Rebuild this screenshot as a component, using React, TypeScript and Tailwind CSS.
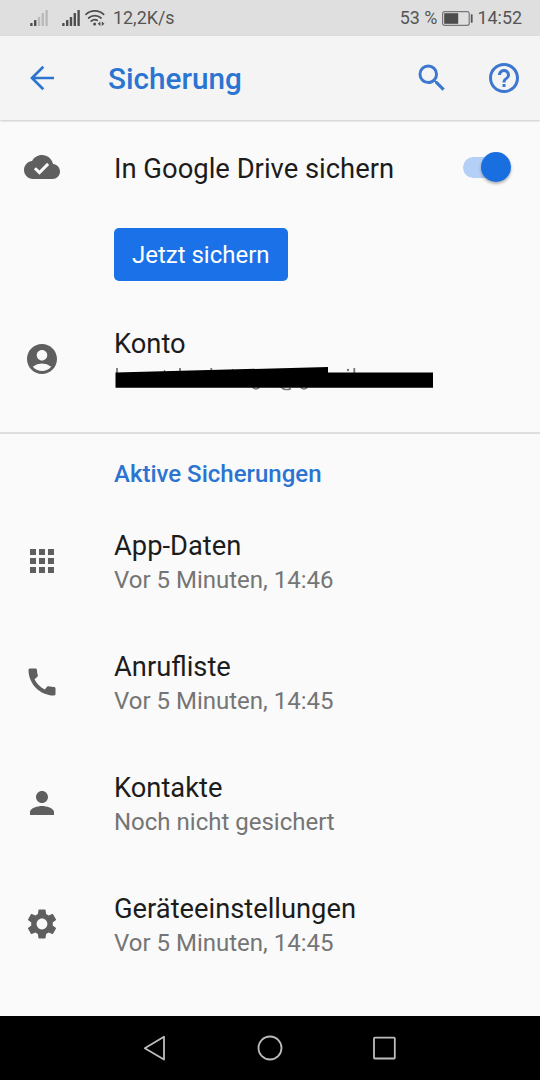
import type { ReactNode } from 'react'
import {
  MdAccountCircle,
  MdApps,
  MdCall,
  MdHelpOutline,
  MdPerson,
  MdSearch,
  MdSettings,
} from 'react-icons/md'

const BACKUPS = [
  { id: 'apps', title: 'App-Daten', status: 'Vor 5 Minuten, 14:46', icon: <MdApps size={36} /> },
  { id: 'calls', title: 'Anrufliste', status: 'Vor 5 Minuten, 14:45', icon: <MdCall size={36} /> },
  { id: 'contacts', title: 'Kontakte', status: 'Noch nicht gesichert', icon: <MdPerson size={36} /> },
  { id: 'settings', title: 'Geräteeinstellungen', status: 'Vor 5 Minuten, 14:45', icon: <MdSettings size={36} /> },
]

function Signal({ strength }: { strength: number }) {
  return (
    <svg width="19" height="18" viewBox="0 0 19 18">
      {[3, 6, 9, 13, 16].map((h, i) => (
        <rect key={h} x={0.2 + i * 3.8} y={17 - h} width="2.4" height={h} rx="0.6" fill={i < strength ? '#4d4d4d' : '#b9b9b9'} />
      ))}
    </svg>
  )
}

function Wifi() {
  return (
    <svg width="20" height="18" viewBox="0 0 20 18" fill="none" stroke="#4d4d4d" strokeWidth="1.7" strokeLinecap="round">
      <path d="M1 5.4a13 13 0 0 1 17.6 0" />
      <path d="M3.6 9a9.2 9.2 0 0 1 12.4 0" />
      <path d="M6.2 12.2a5.4 5.4 0 0 1 6-.9" />
      <circle cx="9.6" cy="15" r="1.5" fill="#4d4d4d" stroke="none" />
      <path d="M15.4 12.6v4.4L12.8 14.8zM16.8 12.6v4.4l2.6-2.2z" fill="#4d4d4d" stroke="none" />
    </svg>
  )
}

function Battery() {
  return (
    <svg width="31" height="15" viewBox="0 0 31 15">
      <rect x="0.6" y="0.7" width="26.6" height="13.6" rx="2" fill="none" stroke="#777" strokeWidth="1.2" />
      <rect x="2.2" y="2.2" width="14" height="10.6" fill="#4d4d4d" />
      <rect x="28.8" y="3.2" width="1.8" height="8.6" rx="0.5" fill="#555" />
    </svg>
  )
}

function StatusBar() {
  return (
    <div className="flex h-9 items-center bg-[#dfdfdf] pl-[30px] pr-[18px] text-[17.9px] text-[#555]">
      <Signal strength={2} />
      <div className="ml-[13px] flex items-center gap-[4px]">
        <Signal strength={5} />
        <Wifi />
      </div>
      <span className="ml-[8px] pt-px">12,2K/s</span>
      <span className="ml-auto pt-px">53 %</span>
      <div className="ml-[5px] mr-[4px]">
        <Battery />
      </div>
      <span className="pt-px">14:52</span>
    </div>
  )
}

function AppBar() {
  return (
    <header className="flex h-[84px] items-center bg-[#f4f4f4] pl-6 pr-[18px] text-[#3c78cf] shadow-[0_1px_2px_rgba(0,0,0,0.2)]">
      <svg width="36" height="36" viewBox="0 0 36 36" fill="none" stroke="#2b74d2" strokeWidth="2.7">
        <path d="M30 18H8M19.3 6.8L8 18l11.3 11.2" />
      </svg>
      <h1 className="ml-12 pt-[2px] text-[29.7px] font-medium leading-9 text-[#2b74d2]">Sicherung</h1>
      <MdSearch size={36} className="ml-auto" />
      <MdHelpOutline size={36} className="ml-9" />
    </header>
  )
}

function CloudDone() {
  return (
    <svg width="36" height="36" viewBox="0 0 24 24" fill="currentColor">
      <path d="M19.35 10.04C18.67 6.59 15.64 4 12 4 9.11 4 6.6 5.64 5.35 8.04 2.34 8.36 0 10.91 0 14c0 3.31 2.69 6 6 6h13c2.76 0 5-2.24 5-5 0-2.64-2.05-4.78-4.65-4.96zM10.3 17.2l-3.7-3.7 1.4-1.4 2.3 2.3 5.1-5.2 1.4 1.4z" />
    </svg>
  )
}

// Account name is blacked out; only the tips of a few letters stay visible.
function HiddenAccount() {
  return (
    <svg className="block" width="320" height="34" viewBox="114 361 320 34">
      <g stroke="#777" strokeWidth="1.8" fill="none">
        <path d="M117 368v7M180 368v6M211.3 368v6M354.3 368v6" />
        <path d="M164.5 370v5M232.5 369v5" strokeWidth="1.3" />
        <path d="M251.5 386q4.5 6 9 0M280 386.5q5 5 11 2M299.5 386q4.5 6 9 0" strokeWidth="1.4" />
      </g>
      <circle cx="348" cy="370" r="1.2" fill="#777" />
      <path d="M115.5 372.5L328 367v5.5h105v15.3H115.5z" fill="#000" />
    </svg>
  )
}

function Row({ icon, title, children }: { icon: ReactNode; title: string; children: ReactNode }) {
  return (
    <div className="flex h-[121px] items-center pl-6">
      <div className="mb-px text-[#5f5f5f]">{icon}</div>
      <div className="ml-[54px] pt-[2px]">
        <div className="text-[27.3px] leading-[34px] text-[#1c1c1c]">{title}</div>
        <div className="h-[34px] text-[24px] leading-[34px] text-[#757575]">{children}</div>
      </div>
    </div>
  )
}

function NavBar() {
  return (
    <nav className="mt-auto flex h-16 items-center justify-center gap-[85px] bg-black">
      <svg width="30" height="30" viewBox="0 0 30 30" fill="none" stroke="#bdbdbd" strokeWidth="1.8" strokeLinejoin="round">
        <path d="M24 3.8v22.8L4.8 15.2z" />
      </svg>
      <svg width="30" height="30" viewBox="0 0 30 30" fill="none" stroke="#bdbdbd" strokeWidth="1.8">
        <circle cx="15" cy="15" r="11.5" />
      </svg>
      <svg width="30" height="30" viewBox="0 0 30 30" fill="none" stroke="#bdbdbd" strokeWidth="1.8">
        <rect x="4" y="4.7" width="20.8" height="20.8" rx="0.8" />
      </svg>
    </nav>
  )
}

export default function App() {
  return (
    <div className="flex h-[1080px] w-[540px] flex-col overflow-hidden bg-[#fafafa] font-['Roboto',sans-serif]">
      <StatusBar />
      <AppBar />
      <main>
        <div className="flex h-[94px] items-center pl-6 pr-[29px]">
          <div className="text-[#5f5f5f]">
            <CloudDone />
          </div>
          <div className="ml-[54px] pt-[3px] text-[27.4px] leading-[34px] text-[#1c1c1c]">In Google Drive sichern</div>
          <button className="ml-auto flex h-[21px] w-12 items-center justify-end rounded-full bg-[#b5d0f6]">
            <span className="size-[30px] shrink-0 rounded-full bg-[#1a6fe0] shadow-[0_2px_3px_rgba(0,0,0,0.3)]" />
          </button>
        </div>
        <div className="pl-[114px] pt-[13.5px]">
          <button className="h-[53.5px] w-[173.5px] rounded-[5px] bg-[#1b72e8] pt-[2px] text-[24px] text-white">Jetzt sichern</button>
        </div>
        <div className="mt-[18px]">
          <Row icon={<MdAccountCircle size={36} />} title="Konto">
            <HiddenAccount />
          </Row>
        </div>
        <section className="mt-3 border-t-2 border-[#dedede]">
          <h2 className="h-[67px] pl-[114px] pt-[23px] text-[24px] font-medium leading-[34px] text-[#2b74d2]">Aktive Sicherungen</h2>
          {BACKUPS.map(b => (
            <Row key={b.id} icon={b.icon} title={b.title}>
              {b.status}
            </Row>
          ))}
        </section>
      </main>
      <NavBar />
    </div>
  )
}
